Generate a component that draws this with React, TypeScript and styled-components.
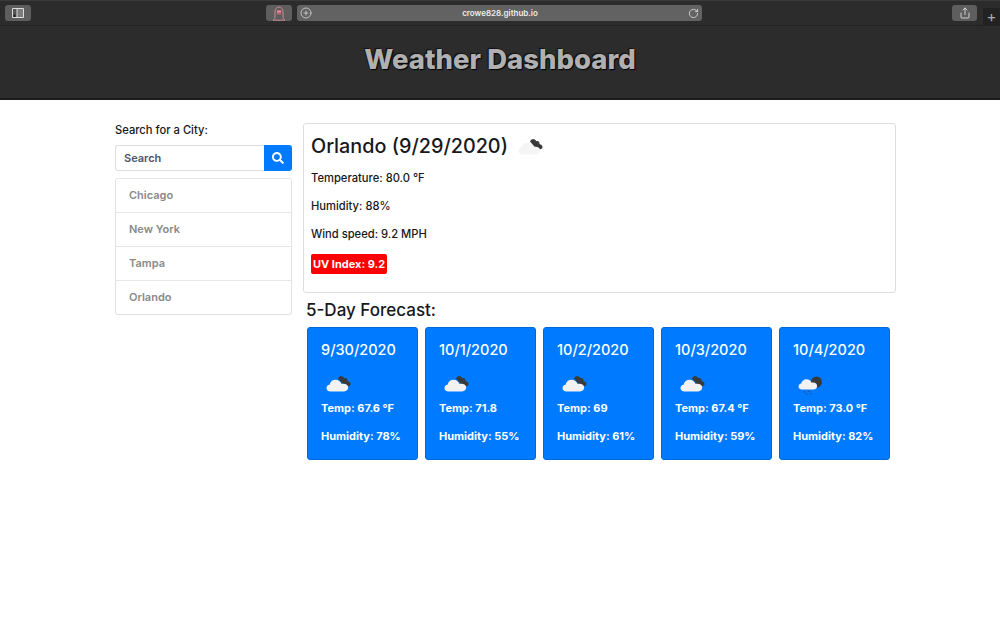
import React from "react";
import styled, { createGlobalStyle } from "styled-components";
import { FaSearch } from "react-icons/fa";
import { CirclePlus, RotateCw, Share } from "lucide-react";

interface Forecast {
  date: string;
  temp: string;
  humidity: string;
  rainy?: boolean;
}

const cities = ["Chicago", "New York", "Tampa", "Orlando"];

const forecasts: Forecast[] = [
  { date: "9/30/2020", temp: "67.6 °F", humidity: "78%" },
  { date: "10/1/2020", temp: "71.8", humidity: "55%" },
  { date: "10/2/2020", temp: "69", humidity: "61%" },
  { date: "10/3/2020", temp: "67.4 °F", humidity: "59%" },
  { date: "10/4/2020", temp: "73.0 °F", humidity: "82%", rainy: true },
];

// dark cloud peeking out behind a white one
const CloudIcon = ({ color = "#f2f2f2" }: { color?: string }) => (
  <svg width="26" height="17" viewBox="0 0 26 17">
    <path
      d="M12 3.500c.7-1.800 2.300-2.700 3.800-2.300 1.300.3 2 1.100 2.500 2 1.500-.4 2.700.3 3.100 1.500.2.600.2 1 .1 1.300 1.500.3 3 1.500 3 3 0 1.300-1 2.200-2.300 2.300l-3.700-.3z"
      fill="#3a3a3a"
    />
    <path
      d="M4.500 16.500C2.100 16.500.5 15.100.5 13c0-1.800 1.300-3.100 3-3.300C4.200 6.800 6.600 4.800 9.500 4.800c2.900 0 5.100 1.700 6 4.200.6-.2 1.200-.3 1.800-.3 2.900 0 4.900 1.700 4.900 3.900 0 2.200-1.800 3.900-4.100 3.900z"
      fill={color}
    />
  </svg>
);

const RainIcon = () => (
  <svg width="26" height="20" viewBox="0 0 26 20">
    <circle cx="18.500" cy="7" r="5.500" fill="#3a3a3a" />
    <path
      d="M4 14.500C2 14.500.5 13.300.5 11.500c0-1.600 1.200-2.800 2.700-3C3.700 6 6 4.200 8.500 4.200c2.500 0 4.400 1.400 5.100 3.500 .5-.2 1-.3 1.500-.3 2.400 0 4 1.500 4 3.500 0 2-1.600 3.600-3.500 3.600z"
      fill="#f2f2f2"
    />
    <circle cx="6.500" cy="17" r="0.800" fill="#3b4a6b" />
    <circle cx="11" cy="16.500" r="0.800" fill="#3b4a6b" />
    <circle cx="8.500" cy="19" r="0.800" fill="#3b4a6b" />
    <circle cx="13" cy="18.800" r="0.800" fill="#3b4a6b" />
  </svg>
);

const SidebarIcon = () => (
  <svg width="12" height="10" viewBox="0 0 12 10">
    <rect x="0" y="0" width="12" height="10" rx="1" fill="#ddd" />
    <rect x="1" y="1" width="3.500" height="8" fill="#555" />
    <rect x="5.500" y="1" width="5.500" height="8" fill="#7c7c7c" />
    <rect x="1.500" y="6.500" width="2" height="2.500" fill="#222" />
  </svg>
);

const GhostIcon = () => (
  <svg width="14" height="15" viewBox="0 0 14 15" fill="none" stroke="#cf8a92" strokeWidth="1">
    <path d="M1 14c1.500-.5 2-2 2-4V5.500C3 3 4.800 1 7 1s4 2 4 4.500V10c0 2 .5 3.500 2 4-1 .5-2 .5-3 0-1 .5-5 .5-6 0-1 .5-2 .5-3 0z" />
    <rect x="4.800" y="4" width="4.400" height="4.500" fill="#b96a75" stroke="none" />
    <circle cx="6" cy="5.500" r="0.700" fill="#f0c0c6" stroke="none" />
    <circle cx="8" cy="5.500" r="0.700" fill="#f0c0c6" stroke="none" />
  </svg>
);

const App = () => {
  return (
    <>
      <GlobalStyle />
      <BrowserBar>
        <ToolButton>
          <SidebarIcon />
        </ToolButton>
        <GhostButton>
          <GhostIcon />
        </GhostButton>
        <AddressBar>
          <CirclePlus size={12} color="#ddd" strokeWidth={1.5} />
          <Address>crowe828.github.io</Address>
          <RotateCw size={11} color="#ddd" strokeWidth={1.8} />
        </AddressBar>
        <ShareButton>
          <Share size={12} color="#ddd" strokeWidth={1.8} />
        </ShareButton>
        <NewTab>+</NewTab>
      </BrowserBar>
      <Header>
        <Title>Weather Dashboard</Title>
      </Header>
      <Container>
        <Sidebar>
          <SearchLabel>Search for a City:</SearchLabel>
          <SearchGroup>
            <SearchInput placeholder="Search" />
            <SearchButton>
              <FaSearch size={12} color="#fff" />
            </SearchButton>
          </SearchGroup>
          <CityList>
            {cities.map((city) => (
              <CityItem key={city}>{city}</CityItem>
            ))}
          </CityList>
        </Sidebar>
        <Main>
          <CurrentCard>
            <CityHeading>
              Orlando (9/29/2020)
              <CloudIcon color="#f5f5f5" />
            </CityHeading>
            <Stat>Temperature: 80.0 °F</Stat>
            <Stat>Humidity: 88%</Stat>
            <Stat>Wind speed: 9.2 MPH</Stat>
            <UvBadge>UV Index: 9.2</UvBadge>
          </CurrentCard>
          <ForecastHeading>5-Day Forecast:</ForecastHeading>
          <ForecastRow>
            {forecasts.map((day) => (
              <ForecastCard key={day.date}>
                <ForecastDate>{day.date}</ForecastDate>
                <ForecastIcon>{day.rainy ? <RainIcon /> : <CloudIcon />}</ForecastIcon>
                <ForecastText>Temp: {day.temp}</ForecastText>
                <ForecastText>Humidity: {day.humidity}</ForecastText>
              </ForecastCard>
            ))}
          </ForecastRow>
        </Main>
      </Container>
    </>
  );
};

const GlobalStyle = createGlobalStyle`
  html, body {
    margin: 0;
    background: #fff;
    font-family: "Inter", "Roboto", sans-serif;
    color: #16181b;
  }
`;

const BrowserBar = styled.div`
  display: flex;
  align-items: center;
  height: 26px;
  box-sizing: border-box;
  padding-left: 5px;
  background: #2c2c2c;
  border-top: 1px solid #3a3a3a;
  border-bottom: 1px solid #222;
`;

const ToolButton = styled.div`
  display: flex;
  align-items: center;
  justify-content: center;
  width: 26px;
  height: 16px;
  background: #5e5e5e;
  border-radius: 3px;
`;

const GhostButton = styled(ToolButton)`
  margin-left: 235px;
`;

const AddressBar = styled.div`
  display: flex;
  align-items: center;
  justify-content: space-between;
  width: 405px;
  height: 16px;
  margin-left: 5px;
  padding: 0 3px;
  box-sizing: border-box;
  background: #626262;
  border-radius: 3px;
`;

const Address = styled.span`
  font-size: 8px;
  font-weight: 600;
  color: #eee;
`;

const ShareButton = styled(ToolButton)`
  margin-left: 250px;
  width: 25px;
`;

const NewTab = styled.div`
  align-self: flex-end;
  flex: 1;
  height: 17px;
  margin-left: 6px;
  background: #222;
  color: #aaa;
  font-size: 15px;
  line-height: 18px;
  text-align: center;
`;

const Header = styled.header`
  display: flex;
  align-items: center;
  justify-content: center;
  height: 74px;
  box-sizing: border-box;
  padding-bottom: 6px;
  background: #2c2c2c;
  border-bottom: 2px solid #1c1c1c;
`;

const Title = styled.h1`
  margin: 0;
  font-size: 27.5px;
  font-weight: 800;
  color: #b0b0b0;
  text-shadow: 1px 1px 1px #000, -1px -1px 1px #111;
`;

const Container = styled.div`
  display: flex;
  gap: 11px;
  width: 781px;
  margin-left: 115px;
  padding-top: 23px;
`;

const Sidebar = styled.aside`
  width: 177px;
  flex: none;
`;

const SearchLabel = styled.div`
  height: 22px;
  font-size: 11.2px;
  font-weight: 500;
  line-height: 15px;
`;

const SearchGroup = styled.div`
  display: flex;
  height: 26px;
`;

const SearchInput = styled.input`
  flex: 1;
  min-width: 0;
  box-sizing: border-box;
  padding: 0 8px;
  border: 1px solid #ddd;
  border-right: 0;
  border-radius: 3px 0 0 3px;
  outline: none;
  font: 600 11px "Inter", sans-serif;

  &::placeholder {
    color: #49566a;
    opacity: 1;
  }
`;

const SearchButton = styled.button`
  display: flex;
  align-items: center;
  justify-content: center;
  width: 28px;
  padding: 0;
  border: 0;
  border-radius: 0 3px 3px 0;
  background: #007bff;
`;

const CityList = styled.ul`
  margin: 7px 0 0;
  padding: 0;
  list-style: none;
  overflow: hidden;
  border: 1px solid #e2e2e2;
  border-top: 0;
  border-radius: 3px;
`;

const CityItem = styled.li`
  height: 34px;
  box-sizing: border-box;
  padding-left: 13px;
  border-top: 1px solid #e6e6e6;
  font-size: 11px;
  font-weight: 600;
  line-height: 32px;
  color: #8a8a8a;
`;

const Main = styled.main`
  flex: 1;
  min-width: 0;
`;

const CurrentCard = styled.section`
  height: 170px;
  box-sizing: border-box;
  padding: 8px 7px;
  border: 1px solid #ddd;
  border-radius: 3px;
`;

const CityHeading = styled.h2`
  display: flex;
  align-items: center;
  gap: 10px;
  height: 28px;
  margin: 0 0 11px;
  font-size: 19.8px;
  font-weight: 550;
`;

const Stat = styled.p`
  height: 28px;
  margin: 0;
  font-size: 11.2px;
  font-weight: 500;
  line-height: 14px;
`;

const UvBadge = styled.div`
  width: fit-content;
  height: 20px;
  margin-top: -1px;
  padding: 0 2px;
  background: #ff0000;
  border-radius: 2px;
  color: #fff;
  font-size: 11px;
  font-weight: 700;
  line-height: 20px;
`;

const ForecastHeading = styled.h3`
  height: 34px;
  margin: 0;
  padding: 7px 0 0 3px;
  box-sizing: border-box;
  font-size: 17px;
  font-weight: 550;
  line-height: 20px;
`;

const ForecastRow = styled.div`
  display: flex;
  gap: 7px;
  padding-left: 4px;
`;

const ForecastCard = styled.article`
  width: 111px;
  height: 133px;
  box-sizing: border-box;
  padding: 14px 13px;
  background: #007bff;
  border: 1px solid #0069d9;
  border-radius: 3px;
  color: #fff;
`;

const ForecastDate = styled.div`
  height: 33px;
  font-size: 14.5px;
  font-weight: 550;
  line-height: 16px;
`;

const ForecastIcon = styled.div`
  height: 26px;
  padding-left: 5px;
`;

const ForecastText = styled.p`
  height: 28px;
  margin: 0;
  font-size: 11px;
  font-weight: 700;
  line-height: 14px;
`;

export default App;
